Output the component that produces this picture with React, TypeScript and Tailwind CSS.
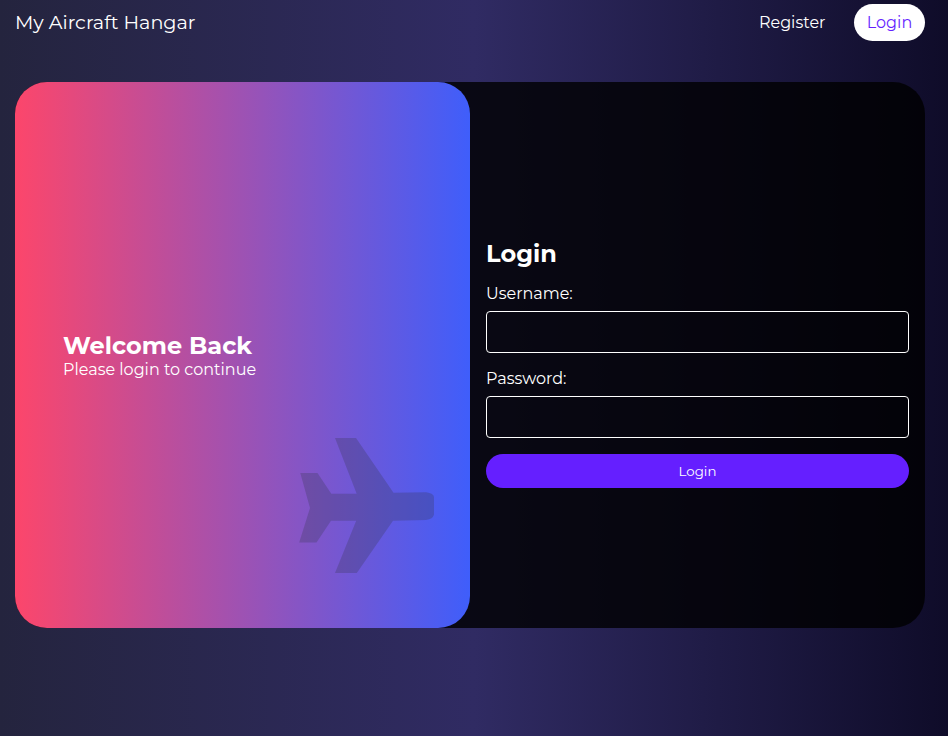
import React from "react";

function Field({ label, type }: { label: string; type: string }) {
  return (
    <label className="mb-4 block">
      <span className="block h-[27px] text-base leading-5">{label}</span>
      <input type={type} className="block h-[42px] w-full rounded border border-white bg-transparent px-3 outline-none" />
    </label>
  );
}

function Plane() {
  return (
    <svg viewBox="0 0 135 136" className="absolute right-[36px] bottom-[54px] h-[136px] w-[135px]" fill="#363650" fillOpacity="0.28">
      <path d="M36 0H57L94.500 54.800L127 54.200Q135 55 135 59.500V76.500Q134 81 127 82L94 82.800L57.800 135H36L57.200 82.800H32L17.500 104.500H.2L11 70L1.300 35H18.500L32.300 55.800H57.700Z" />
    </svg>
  );
}

export default function App() {
  return (
    <div className="min-h-screen bg-linear-[to_right,#24243e,#302b63,#0f0c29] pr-[23px] pl-[15px] font-['Montserrat','Inter',sans-serif] text-white">
      <header className="flex h-[45px] items-center justify-between">
        <h1 className="pb-px text-[19.2px] leading-6">My Aircraft Hangar</h1>
        <nav className="flex items-center gap-[28.5px]">
          <a className="text-base">Register</a>
          <a className="flex h-[37px] w-[71px] items-center justify-center rounded-[18.5px] bg-white text-base text-[#651fff]">Login</a>
        </nav>
      </header>
      <main className="mt-[37px] flex h-[546px] rounded-[32px] bg-black/80">
        <section className="relative flex w-1/2 flex-col justify-center rounded-[32px] bg-linear-[to_right,#fc466b,#3f5efb] pt-1.5 pl-12">
          <h2 className="text-2xl leading-[24px] font-bold">Welcome Back</h2>
          <p className="text-base leading-6">Please login to continue</p>
          <Plane />
        </section>
        <form className="flex w-1/2 flex-col justify-center px-4 pt-[17px]">
          <h2 className="mb-4 text-2xl leading-7 font-bold">Login</h2>
          <Field label="Username:" type="text" />
          <Field label="Password:" type="password" />
          <button type="button" className="h-[34px] rounded-full bg-[#651fff] pt-0.5 text-[13.333px]">Login</button>
        </form>
      </main>
    </div>
  );
}
